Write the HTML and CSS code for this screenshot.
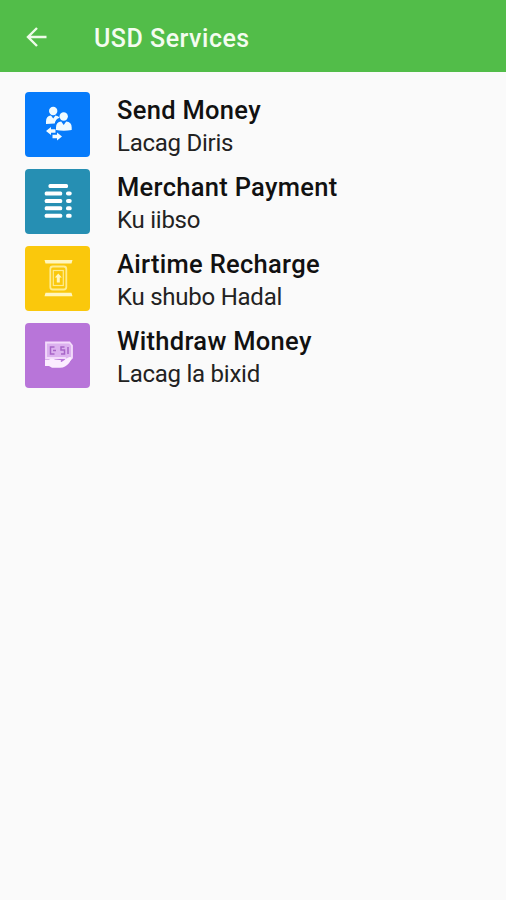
FILE: index.html
```html
<!DOCTYPE html>
<html lang="en">
<head>
    <meta charset="UTF-8">
    <meta name="viewport" content="width=device-width, initial-scale=1.0">
    <title>USD Services</title>
    <link rel="stylesheet" href="styles.css">
</head>
<body>

<header>
    <button class="back" aria-label="Back">
        <svg width="22" height="22" viewBox="0 0 22 22">
            <path d="M20.5 11H2.5M11 2L2 11l9 9"/>
        </svg>
    </button>
    <h1>USD Services</h1>
</header>

<main class="services">
    <!-- Send Money -->
    <a class="service">
        <svg class="tile send" viewBox="0 0 65 65">
            <circle cx="28.2" cy="19" r="4.2"/>
            <path d="M21 32v-2.500q0-5.500 5-6l2.200 3 2.200-3q3 .3 4.300 2.300-4.200 1.200-5 5.700z"/>
            <circle cx="38.700" cy="24.500" r="4.200"/>
            <path d="M31 38v-2.500q0-5.500 5.200-6l2.500 3.500 2.500-3.500q5.500.5 5.500 6v2.500q-8 1.500-15.700 0z"/>
            <path d="M21 39l5-4v2.300h4.500v3.400h-4.500v2.300z"/>
            <path d="M37 44.500l-5-4v2.300h-4.500v3.400h4.500v2.300z"/>
        </svg>
        <div class="label">
            <h2>Send Money</h2>
            <p>Lacag Diris</p>
        </div>
    </a>

    <!-- Merchant Payment -->
    <a class="service">
        <svg class="tile merchant" viewBox="0 0 65 65">
            <rect x="23.500" y="15" width="19.500" height="4" rx="1.500"/>
            <rect x="19.700" y="22.400" width="17.500" height="4" rx="1.500"/>
            <rect x="19.700" y="29.900" width="17.500" height="4" rx="1.500"/>
            <rect x="19.700" y="37.300" width="17.500" height="4" rx="1.500"/>
            <rect x="19.700" y="44.800" width="17.500" height="4" rx="1.500"/>
            <rect x="41" y="22.400" width="5.700" height="4" rx="1.900"/>
            <rect x="41" y="29.900" width="5.700" height="4" rx="1.900"/>
            <rect x="41" y="37.300" width="5.700" height="4" rx="1.900"/>
            <rect x="41" y="44.800" width="5.700" height="4" rx="1.900"/>
        </svg>
        <div class="label">
            <h2>Merchant Payment</h2>
            <p>Ku iibso</p>
        </div>
    </a>

    <!-- Airtime Recharge -->
    <a class="service">
        <svg class="tile airtime" viewBox="0 0 65 65">
            <path d="M19.500 14h28l-1 3.500h-26zM20.500 46.800h26l1 3.500h-28z"/>
            <rect class="line" x="25.300" y="20.500" width="16" height="23" rx="2.500"/>
            <rect class="line thin" x="28.300" y="24.500" width="10" height="15"/>
            <path d="M33.300 27.500l3.500 4h-2v5h-3v-5h-2z"/>
        </svg>
        <div class="label">
            <h2>Airtime Recharge</h2>
            <p>Ku shubo Hadal</p>
        </div>
    </a>

    <!-- Withdraw Money -->
    <a class="service">
        <svg class="tile withdraw" viewBox="0 0 65 65">
            <path class="note" d="M21 19.500h23.500l2.500 3v12.500l-4 4-3-4h-19z"/>
            <path class="mark" d="M29.500 24h-4v7h4M28 27.500h3M39.500 24h-3.500v3h3.500v4h-3.500M43 24v7"/>
            <path d="M20 36.500h4q3-2 6 0l5 .5q2 .5.500 2h-5 6l6-4q3-2 4 0-1 5-6.500 8.500-2 1.200-5 1.200h-8l-3-1.700h-4z"/>
        </svg>
        <div class="label">
            <h2>Withdraw Money</h2>
            <p>Lacag la bixid</p>
        </div>
    </a>
</main>

</body>
</html>
```
FILE: styles.css
```css
body {
    font-family: Roboto, sans-serif;
    margin: 0;
    min-height: 100vh;
    background-color: #fafafa;
    color: #111;
}
header {
    display: flex;
    align-items: center;
    height: 72px;
    padding: 0 26px;
    background-color: #52bd49;
    color: #f4fcf0;
}
h1, h2, p {
    margin: 0;
    white-space: nowrap;
}
h1 {
    margin-left: 46px;
    padding-top: 4px;
    font-size: 25px;
    font-weight: 500;
    letter-spacing: 0.5px;
}
.back {
    display: flex;
    padding: 2px 0 0;
    border: none;
    background: none;
}
.back svg {
    fill: none;
    stroke: #eefbe9;
    stroke-width: 2.4;
}
.services {
    display: flex;
    flex-direction: column;
    gap: 12px;
    padding: 20px 25px;
}
.service {
    display: flex;
    gap: 27px;
    height: 65px;
}
.tile {
    width: 65px;
    height: 65px;
    border-radius: 4px;
    fill: #fff;
}
.send {
    background-color: #067bfb;
    fill: #f0fbff;
}
.merchant {
    background-color: #268fb3;
}
.airtime {
    background-color: #fac80c;
    fill: #fff6bd;
}
.withdraw {
    background-color: #b875d9;
    fill: #fbeeff;
}
.line {
    fill: none;
    stroke: #feec90;
    stroke-width: 1.8;
}
.thin {
    stroke-width: 1.2;
}
.note {
    fill: #dcb2ef;
    stroke: #f3dcfb;
    stroke-width: 1.8;
}
.mark {
    fill: none;
    stroke: #a765c8;
    stroke-width: 1.5;
}
.label h2 {
    padding-top: 2px;
    font-size: 25.5px;
    line-height: 33px;
    font-weight: 500;
    letter-spacing: 0.3px;
}
.label p {
    font-size: 24px;
    line-height: 32px;
    letter-spacing: -0.25px;
    color: #222;
}
```
